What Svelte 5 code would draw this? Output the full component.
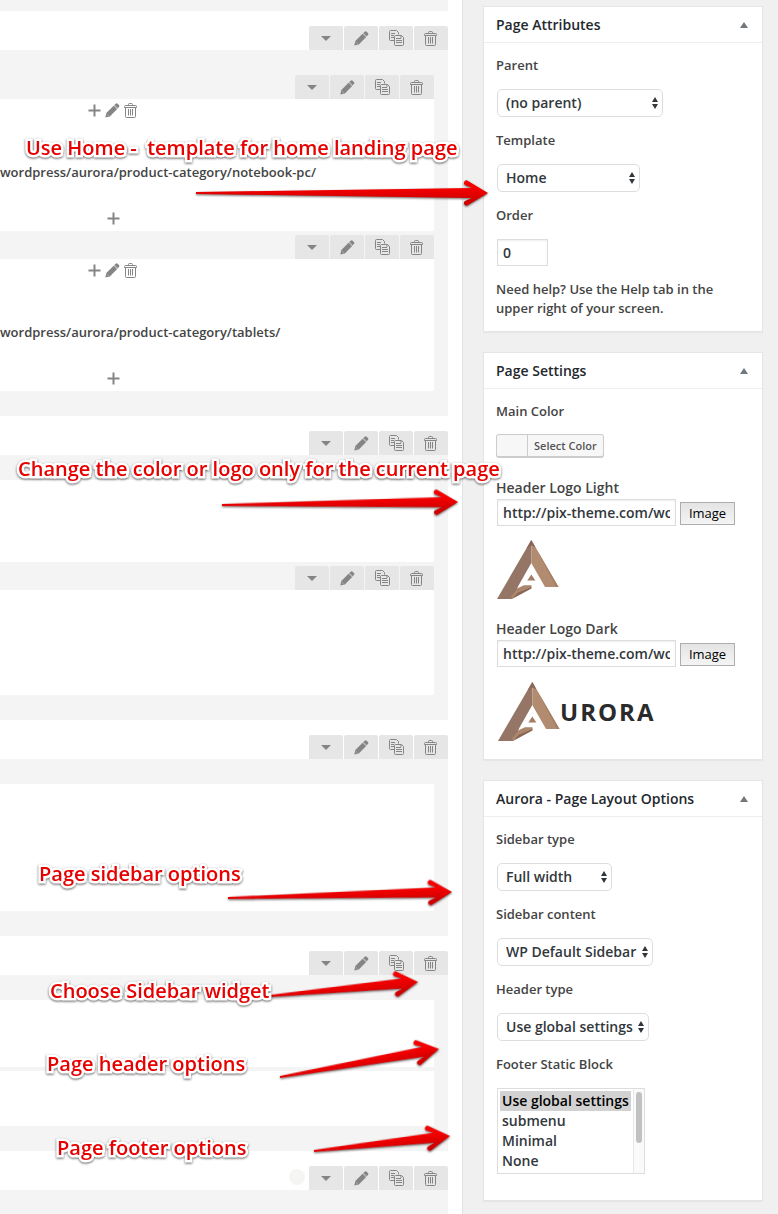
<script>
  const rows = [
    {
      columns: [
        { tools: true, height: 132, text: 'wordpress/aurora/product-category/notebook-pc/' },
        { tools: true, height: 132, text: 'wordpress/aurora/product-category/tablets/' }
      ]
    },
    { columns: [{ height: 82 }, { tools: true, height: 105 }] },
    { columns: [{ height: 127 }] },
    { columns: [{ height: 67 }, { height: 55 }] },
    { dot: true, columns: [] }
  ];

  const attributes = [
    { id: 'parent', label: 'Parent', value: '(no parent)', width: 166 },
    { id: 'template', label: 'Template', value: 'Home', width: 143 }
  ];

  const layout = [
    { id: 'sidebar-type', label: 'Sidebar type', value: 'Full width', width: 115 },
    { id: 'sidebar-content', label: 'Sidebar content', value: 'WP Default Sidebar', width: 156 },
    { id: 'header-type', label: 'Header type', value: 'Use global settings', width: 152 }
  ];

  const blocks = ['Use global settings', 'submenu', 'Minimal', 'None'];
  let block = $state(['Use global settings']);

  const notes = [
    { text: 'Use Home -  template for home landing page', x: 26, y: 134, from: [196, 193], to: [488, 193] },
    { text: 'Change the color or logo only for the current page', x: 18, y: 455, from: [222, 505], to: [458, 502] },
    { text: 'Page sidebar options', x: 39, y: 860, from: [228, 898], to: [452, 892] },
    { text: 'Choose Sidebar widget', x: 50, y: 977, from: [270, 996], to: [418, 982] },
    { text: 'Page header options', x: 47, y: 1050, from: [280, 1077], to: [439, 1049] },
    { text: 'Page footer options', x: 57, y: 1134, from: [314, 1151], to: [450, 1136] }
  ];

  function arrow({ from, to }) {
    const dx = to[0] - from[0];
    const dy = to[1] - from[1];
    const l = Math.hypot(dx, dy);
    return {
      transform: `translate(${from[0]} ${from[1]}) rotate(${(Math.atan2(dy, dx) * 180) / Math.PI})`,
      d: `M0 -1L${l - 16} -5L${l - 23} -8A2.5 2.5 0 0 1 ${l - 20} -12L${l} 0L${l - 20} 12A2.5 2.5 0 0 1 ${l - 23} 8L${l - 16} 5L0 1Z`
    };
  }
</script>

{#snippet plus()}
  <svg width="13" height="13" viewBox="0 0 13 13" aria-hidden="true"><path d="M5.5 0.5h2v5h5v2h-5v5h-2v-5h-5v-2h5z" fill="#858585" /></svg>
{/snippet}

{#snippet pencil()}
  <svg width="15" height="15" viewBox="0 0 15 15" aria-hidden="true">
    <path d="M0.3 14.5L1.3 10L8.6 2.8L12 6.2L4.8 13.4Z" fill="#858585" />
    <path d="M9.4 2L11 0.6Q11.8 0 12.6 0.7L14.1 2.2Q14.8 3 14.1 3.8L12.7 5.3Z" fill="#858585" />
    <path d="M8.6 2.8L9.4 2L12.7 5.3L12 6.2Z" fill="#aaa" />
    <path d="M1.6 11L4 13.3" stroke="#c4c4c4" stroke-width="0.6" />
  </svg>
{/snippet}

{#snippet trash()}
  <svg width="14" height="15" viewBox="0 0 14 15" fill="none" stroke="#858585" aria-hidden="true">
    <path d="M4.5 2V1.5Q4.5 0.5 5.5 0.5H7.5Q8.5 0.5 8.5 1.5V2M0.5 4.5V3.5Q0.5 2.5 1.5 2.5H11.5Q12.5 2.5 12.5 3.5V4.5H0.5M1.5 4.5V13.5Q1.5 14.5 2.5 14.5H10.5Q11.5 14.5 11.5 13.5V4.5M4.5 6V12.5M6.5 6V12.5M8.5 6V12.5" />
  </svg>
{/snippet}

{#snippet copy()}
  <svg width="15" height="16" viewBox="0 0 15 16" fill="none" stroke="#858585" aria-hidden="true">
    <path d="M5 10.5H1.5Q0.5 10.5 0.5 9.5V1.5Q0.5 0.5 1.5 0.5H7.5L9.5 2.5V4.5M2 3.5H6M2 5.5H5M2 7.5H5" />
    <path d="M5.5 6.5Q5.5 5.5 6.5 5.5H12.5L14.5 7.5V14.5Q14.5 15.5 13.5 15.5H6.5Q5.5 15.5 5.5 14.5ZM7 8.5H12M7 10.5H13M7 12.5H13M12 5.5V8" />
  </svg>
{/snippet}

{#snippet tools(dot)}
  <div class="tools">
    {#if dot}<span class="dot"></span>{/if}
    <button aria-label="Toggle"><svg width="10" height="5" viewBox="0 0 10 5" aria-hidden="true"><path d="M0 0H10L5 5Z" fill="#858585" /></svg></button>
    <button aria-label="Edit">{@render pencil()}</button>
    <button aria-label="Clone">{@render copy()}</button>
    <button aria-label="Delete">{@render trash()}</button>
  </div>
{/snippet}

{#snippet heading(title)}
  <header>
    <h2>{title}</h2>
    <button aria-label="Collapse"><svg width="8" height="6" viewBox="0 0 8 6" aria-hidden="true"><path d="M4 0L8 6H0Z" fill="#72777c" /></svg></button>
  </header>
{/snippet}

{#snippet choice(field)}
  <div class="field">
    <label for={field.id}>{field.label}</label>
    <span class="choice" style:width="{field.width}px">
      <select id={field.id}><option>{field.value}</option></select>
      <svg width="6" height="12" viewBox="0 0 6 12" aria-hidden="true"><path d="M3 0L6 5H0ZM0 7H6L3 12Z" fill="#32373c" /></svg>
    </span>
  </div>
{/snippet}

{#snippet mark()}
  <svg width="63" height="59" viewBox="-1 0 63 59" aria-hidden="true">
    <path d="M34.3 0L0 59H15L19 53L21 46.5L34.3 23Z" fill="#957565" />
    <path d="M34.3 0L61.5 47H48L34.3 23Z" fill="#b28c70" />
    <path d="M34.3 0L29.5 8.5L34.3 5.5L38.5 7.5Z" fill="#8a6656" />
    <path d="M38.5 7.5L61.5 47H59Z" fill="#a87e64" />
    <path d="M15 59L20 52.5L34.5 46.5V48.5Z" fill="#8a6656" />
    <path d="M14 56.5L21 48L27 45.2H34.5V46.7L20 53L15 59Z" fill="#ac856b" />
    <path d="M34.3 34.5L38.4 40.5H30.3Z" fill="#a57d67" />
  </svg>
{/snippet}

{#snippet logo(id, title, word)}
  <div class="logo-field">
    <label for={id}>{title}</label>
    <div class="upload">
      <input {id} type="text" value="http://pix-theme.com/wordpress/aurora/" />
      <button>Image</button>
    </div>
    <div class="logo" class:word>{@render mark()}{#if word}<span>URORA</span>{/if}</div>
  </div>
{/snippet}

<div class="page">
  <main>
    <div class="row-end"></div>
    {#each rows as row}
      <section>
        {@render tools(row.dot)}
        <div class="row">
          {#each row.columns as column}
            <div class="column">
              {#if column.tools}{@render tools()}{/if}
              <div class="content" style:min-height="{column.height}px">
                {#if column.text}
                  <div class="controls">
                    <button aria-label="Add">{@render plus()}</button>
                    <button aria-label="Edit">{@render pencil()}</button>
                    <button aria-label="Delete">{@render trash()}</button>
                  </div>
                  <p>{column.text}</p>
                  <div class="controls"><button aria-label="Append">{@render plus()}</button></div>
                {/if}
              </div>
            </div>
          {/each}
        </div>
      </section>
    {/each}
  </main>

  <aside>
    <section class="box">
      {@render heading('Page Attributes')}
      <div class="body">
        {#each attributes as field}{@render choice(field)}{/each}
        <div class="field">
          <label for="order">Order</label>
          <input id="order" class="order" type="text" value="0" />
        </div>
        <p>Need help? Use the Help tab in the upper right of your screen.</p>
      </div>
    </section>

    <section class="box">
      {@render heading('Page Settings')}
      <div class="body settings">
        <div class="field">
          <span class="label">Main Color</span>
          <button class="color"><i></i><span>Select Color</span></button>
        </div>
        {@render logo('logo-light', 'Header Logo Light', false)}
        {@render logo('logo-dark', 'Header Logo Dark', true)}
      </div>
    </section>

    <section class="box">
      {@render heading('Aurora - Page Layout Options')}
      <div class="body options">
        {#each layout as field}{@render choice(field)}{/each}
        <div class="field">
          <label for="footer">Footer Static Block</label>
          <span class="list">
            <select id="footer" multiple size="4" bind:value={block}>
              {#each blocks as name}<option value={name}>{name}</option>{/each}
            </select>
            <span class="track"><i></i></span>
          </span>
        </div>
      </div>
    </section>
  </aside>

  <div class="notes">
    <svg width="100%" height="100%" aria-hidden="true">
      <defs>
        <linearGradient id="red" x1="0" y1="0" x2="0" y2="1">
          <stop offset="0.3" stop-color="#f60000" />
          <stop offset="0.8" stop-color="#cf0000" />
        </linearGradient>
      </defs>
      {#each notes as note}
        {@const shape = arrow(note)}
        <path class="arrow" d={shape.d} transform={shape.transform} fill="url(#red)" />
      {/each}
    </svg>
    {#each notes as note}
      <span class="note" style:left="{note.x}px" style:top="{note.y}px">{note.text}</span>
    {/each}
  </div>
</div>

<style>
  :global(body) {
    margin: 0;
    background: #f0f0f0;
  }
  .page {
    position: relative;
    display: grid;
    grid-template-columns: minmax(0, 1fr) 280px;
    gap: 20px;
    padding-right: 15px;
    overflow: hidden;
    height: 100vh;
    font: 600 13px/19px 'Open Sans', sans-serif;
    color: #444;
  }
  .page * {
    box-sizing: border-box;
  }
  button,
  input,
  select {
    margin: 0;
    padding: 0;
    border: 0;
    border-radius: 0;
    font: inherit;
    color: inherit;
    background: none;
  }
  svg {
    display: block;
    flex: none;
  }
  p,
  h2 {
    margin: 0;
  }
  main {
    padding-right: 14px;
    background: #fff;
    border-right: 1px solid #e2e2e2;
  }
  .row-end {
    height: 11px;
    margin-bottom: 15px;
    background: #f4f4f4;
  }
  main section {
    margin-bottom: 15px;
  }
  .tools {
    display: flex;
    justify-content: flex-end;
    gap: 1px;
    height: 24px;
  }
  .tools button {
    display: flex;
    align-items: center;
    justify-content: center;
    width: 34px;
    background: #e6e6e6;
    border-radius: 2px 2px 0 0;
  }
  .dot {
    width: 16px;
    height: 16px;
    margin: 3px 3px 0 0;
    border-radius: 50%;
    background: #f5f5f3;
  }
  .row {
    display: flex;
    flex-direction: column;
    gap: 4px;
    min-height: 50px;
    padding: 25px 14px 25px 0;
    background: #f4f4f4;
  }
  .content {
    display: flex;
    flex-direction: column;
    gap: 38px;
    padding-top: 4px;
    background: #fff;
    border-radius: 0 0 2px 0;
  }
  .controls {
    display: flex;
    align-items: center;
    justify-content: center;
    gap: 4px;
    width: 226px;
    height: 15px;
  }
  .content p {
    margin: 7px 0 -9px;
    white-space: nowrap;
  }
  .controls button {
    display: flex;
  }

  aside {
    display: flex;
    flex-direction: column;
    gap: 20px;
    padding-top: 6px;
  }
  .box {
    background: #fff;
    border: 1px solid #e5e5e5;
    box-shadow: 0 1px 1px rgba(0, 0, 0, 0.04);
  }
  header {
    display: flex;
    align-items: center;
    justify-content: space-between;
    height: 36px;
    padding: 0 14px 0 12px;
    border-bottom: 1px solid #eee;
  }
  h2 {
    font-size: 14px;
    line-height: 20px;
    font-weight: 600;
    color: #23282d;
  }
  .body {
    display: flex;
    flex-direction: column;
    gap: 14px;
    padding: 13px 12px;
  }
  .field {
    display: flex;
    flex-direction: column;
    align-items: flex-start;
    gap: 14px;
  }
  .choice {
    position: relative;
    margin-left: 1px;
  }
  .choice select {
    display: block;
    width: 100%;
    height: 28px;
    padding: 0 8px 2px;
    appearance: none;
    background: #fff;
    border: 1px solid #ddd;
    border-radius: 5px;
    font-size: 14px;
    color: #32373c;
  }
  .choice svg {
    position: absolute;
    top: 8px;
    right: 5px;
    pointer-events: none;
  }
  input {
    height: 27px;
    margin-left: 1px;
    padding: 0 5px;
    border: 1px solid #ddd;
    background: #fff;
    box-shadow: inset 0 1px 2px rgba(0, 0, 0, 0.07);
    font-size: 14px;
    color: #32373c;
  }
  .order {
    width: 51px;
  }
  .settings {
    gap: 20px;
    padding-bottom: 17px;
  }
  .options {
    padding-bottom: 26px;
  }
  .color {
    display: flex;
    height: 24px;
    border: 1px solid #ccc;
    border-bottom-width: 2px;
    border-radius: 3px;
    background: #f7f7f7;
    font-size: 11px;
    line-height: 22px;
    color: #555;
  }
  .settings .field {
    gap: 13px;
  }
  .color i {
    width: 30px;
  }
  .color span {
    padding: 0 6px;
    border-left: 1px solid #ccc;
  }
  .logo-field label {
    display: block;
    font-size: 14px;
  }
  .upload {
    display: flex;
    align-items: flex-end;
    gap: 4px;
    margin-top: 2px;
  }
  .upload input {
    width: 179px;
  }
  .upload button {
    width: 55px;
    height: 23px;
    margin-bottom: 1px;
    border: 1px solid #adadad;
    background: linear-gradient(#e4e4e4, #f4f4f4);
    font-weight: 500;
    color: #000;
  }
  .logo {
    display: flex;
    align-items: center;
    margin-top: 14px;
    font-size: 24px;
    line-height: 32px;
    font-weight: 700;
    letter-spacing: 2px;
    color: #2b2b2b;
  }
  .word {
    min-height: 61px;
    padding-left: 1px;
  }
  .list {
    display: flex;
    width: 148px;
    height: 86px;
    margin-left: 1px;
    border: 1px solid #ddd;
  }
  .list select {
    flex: 1;
    min-width: 0;
    padding: 2px;
    overflow: hidden;
    font-size: 14px;
    line-height: 20px;
    color: #32373c;
    outline: 0;
  }
  .list option {
    height: 20px;
    min-height: 20px;
    padding: 0 2px;
    font-weight: 600;
  }
  .list option:checked {
    color: #000;
    background: #d2d2d2 linear-gradient(#d2d2d2, #d2d2d2);
  }
  .track {
    width: 11px;
    padding: 3px 2px;
    border-left: 1px solid #e8e8e8;
    background: #fafafa;
  }
  .track i {
    display: block;
    height: 51px;
    border-radius: 3px;
    background: #c1c1c1;
  }

  .notes {
    position: absolute;
    inset: 0;
    pointer-events: none;
  }
  .arrow {
    filter: drop-shadow(0 1px 1px rgba(0, 0, 0, 0.6));
  }
  .note {
    position: absolute;
    font: 600 20px/28px 'Open Sans', sans-serif;
    white-space: pre;
    color: #e60000;
    -webkit-text-stroke: 5px #fff;
    paint-order: stroke fill;
    stroke-linejoin: round;
    filter: drop-shadow(0 1px 1px rgba(0, 0, 0, 0.6));
  }
</style>
